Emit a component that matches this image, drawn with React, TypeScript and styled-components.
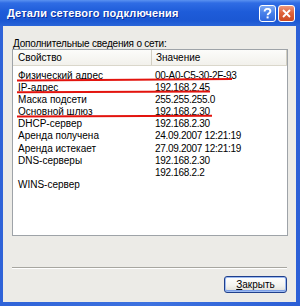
import React from "react";
import styled, { createGlobalStyle } from "styled-components";

const Global = createGlobalStyle`
  html, body { margin: 0; padding: 0; background: #ffffff; }
  body { font-family: "Liberation Sans", Arial, sans-serif; }
`;

const Window = styled.div`
  width: 300px;
  height: 306px;
  box-sizing: border-box;
  display: flex;
  flex-direction: column;
  background: linear-gradient(90deg, #2f63d8, #3d72e0 50%, #2c5fd6);
  padding: 0 4px 4px 3px;
  overflow: hidden;
`;

const TitleBar = styled.div`
  height: 26px;
  margin: 0 -4px 0 -3px;
  padding: 0 5px 0 7px;
  display: flex;
  align-items: center;
  gap: 2px;
  background: linear-gradient(
    180deg,
    #5b92f0 0px,
    #2f6ce4 3px,
    #1e5cd9 45%,
    #1b57d3 80%,
    #2a64d8 100%
  );
`;

const Title = styled.div`
  flex: 1;
  color: #ffffff;
  font-weight: bold;
  font-size: 11px;
  letter-spacing: 0.15px;
  text-shadow: 1px 1px 0 #0a2fa0;
  white-space: nowrap;
  padding-bottom: 1px;
`;

const CaptionButton = styled.div<{ $kind: "help" | "close" }>`
  width: 17px;
  height: 17px;
  box-sizing: border-box;
  border: 1px solid #ffffff;
  border-radius: 3px;
  display: flex;
  align-items: center;
  justify-content: center;
  background: ${(p) =>
    p.$kind === "close"
      ? "linear-gradient(180deg, #ee9a7e 0%, #e0643c 45%, #cc4a22 100%)"
      : "linear-gradient(180deg, #7fa9f3 0%, #4a82ea 45%, #2f66dd 100%)"};
`;

const Client = styled.div`
  flex: 1;
  display: flex;
  flex-direction: column;
  background: #ecebe7;
  padding: 11px 8px 0 9px;
`;

const Label = styled.div`
  font-size: 10px;
  letter-spacing: -0.2px;
  line-height: 12px;
  color: #000;
  padding-left: 1px;
  padding-top: 1px;
  margin-bottom: -1px;
  white-space: nowrap;
`;

const ListBox = styled.div`
  position: relative;
  height: 187px;
  box-sizing: border-box;
  border: 1px solid #9ea3a8;
  background: #ffffff;
  display: flex;
  flex-direction: column;
  overflow: hidden;
`;

const Header = styled.div`
  display: flex;
  height: 16px;
  box-sizing: border-box;
  background: linear-gradient(180deg, #fcfcfa 0%, #f2f1ec 100%);
  border-bottom: 1px solid #dad7cb;
`;

const HeaderCell = styled.div<{ $w: number; $pad: number }>`
  width: ${(p) => p.$w}px;
  box-sizing: border-box;
  padding-left: ${(p) => p.$pad}px;
  font-size: 10px;
  line-height: 15px;
  color: #000;
  border-right: 1px solid #d2cfc2;
  white-space: nowrap;
`;

const Body = styled.div`
  padding-top: 4px;
  display: flex;
  flex-direction: column;
`;

const Row = styled.div`
  display: flex;
  height: 12.1px;
`;

const Cell = styled.div<{ $w: number; $pad: number; $value?: boolean }>`
  width: ${(p) => p.$w}px;
  box-sizing: border-box;
  padding-left: ${(p) => p.$pad}px;
  font-size: 10px;
  letter-spacing: ${(p) => (p.$value ? "-0.3px" : "0")};
  line-height: 12px;
  color: #000;
  white-space: nowrap;
`;

const Marks = styled.svg`
  position: absolute;
  left: 0;
  top: 0;
  width: 100%;
  height: 100%;
  pointer-events: none;
`;

const Separator = styled.div`
  margin-top: 31px;
  height: 1px;
  background: #a7a6a0;
  border-bottom: 1px solid #ffffff;
  margin-right: 1px;
`;

const Footer = styled.div`
  display: flex;
  justify-content: flex-end;
  padding-top: 7px;
  padding-right: 1px;
`;

const Button = styled.button`
  width: 63px;
  height: 17px;
  box-sizing: border-box;
  border: 1px solid #1f3f8c;
  border-radius: 3px;
  background: linear-gradient(180deg, #ffffff 0%, #f2f2ee 60%, #dcdad2 100%);
  box-shadow: inset 0 0 0 1px #9dbaf0, inset 0 -1px 0 1px #7c9fe6;
  font-family: "Liberation Sans", Arial, sans-serif;
  font-size: 10px;
  line-height: 13px;
  color: #000;
  padding: 0;
  display: flex;
  align-items: center;
  justify-content: center;
`;

const Access = styled.span`
  text-decoration: underline;
`;

const rows: [string, string][] = [
  ["Физический адрес", "00-A0-C5-30-2F-93"],
  ["IP-адрес", "192.168.2.45"],
  ["Маска подсети", "255.255.255.0"],
  ["Основной шлюз", "192.168.2.30"],
  ["DHCP-сервер", "192.168.2.30"],
  ["Аренда получена", "24.09.2007 12:21:19"],
  ["Аренда истекает", "27.09.2007 12:21:19"],
  ["DNS-серверы", "192.168.2.30"],
  ["", "192.168.2.2"],
  ["WINS-сервер", ""],
];

export default function App() {
  return (
    <>
      <Global />
      <Window>
        <TitleBar>
          <Title>Детали сетевого подключения</Title>
          <CaptionButton $kind="help">
            <svg width="9" height="11" viewBox="0 0 9 11">
              <path
                d="M1.6 3.4 C1.6 1.6 3 0.9 4.5 0.9 C6.2 0.9 7.4 1.9 7.4 3.3 C7.4 5.2 4.6 5.2 4.6 7.2"
                fill="none"
                stroke="#fff"
                strokeWidth="1.9"
              />
              <rect x="3.6" y="8.4" width="2" height="2" fill="#fff" />
            </svg>
          </CaptionButton>
          <CaptionButton $kind="close">
            <svg width="9" height="9" viewBox="0 0 9 9">
              <path d="M1 1 L8 8 M8 1 L1 8" stroke="#fff" strokeWidth="1.8" />
            </svg>
          </CaptionButton>
        </TitleBar>
        <Client>
          <Label>Дополнительные сведения о сети:</Label>
          <ListBox>
            <Header>
              <HeaderCell $w={139} $pad={5}>
                Свойство
              </HeaderCell>
              <HeaderCell $w={135} $pad={4}>
                Значение
              </HeaderCell>
            </Header>
            <Body>
              {rows.map(([k, v], i) => (
                <Row key={i}>
                  <Cell $w={139} $pad={5}>
                    {k}
                  </Cell>
                  <Cell $w={135} $pad={3} $value>
                    {v}
                  </Cell>
                </Row>
              ))}
            </Body>
            <Marks>
              <path d="M4 30.4 L120 29.8 L219 29" stroke="#e3140e" strokeWidth="2" fill="none" />
              <path d="M4 42.2 L197 41.6" stroke="#e3140e" strokeWidth="2" fill="none" />
              <path d="M4 66.4 L199 65.8" stroke="#e3140e" strokeWidth="2" fill="none" />
            </Marks>
          </ListBox>
          <Separator />
          <Footer>
            <Button>
              <Access>З</Access>акрыть
            </Button>
          </Footer>
        </Client>
      </Window>
    </>
  );
}
